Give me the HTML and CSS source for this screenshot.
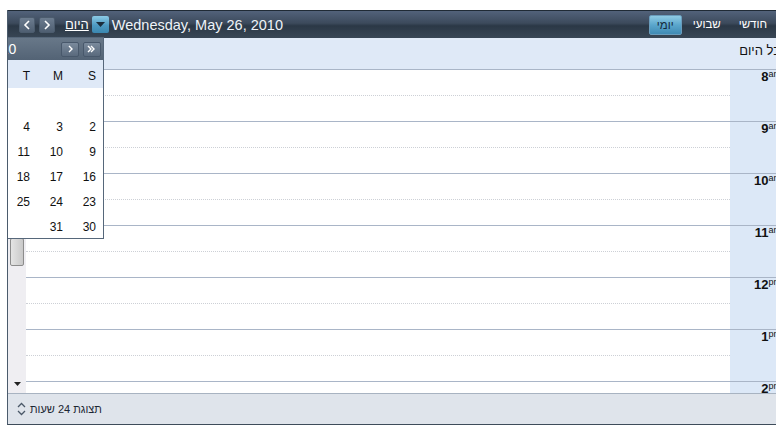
FILE: index.html
```html
<!DOCTYPE html>
<html lang="he">
<head>
    <meta charset="UTF-8">
    <title>Scheduler</title>
    <link rel="stylesheet" href="styles.css">
</head>
<body>
<div class="scheduler">
    <div class="toolbar">
        <div class="nav">
            <span class="nav_btn"><svg width="8" height="10" viewBox="0 0 8 10"><polyline points="6,1 2,5 6,9" fill="none" stroke="#fff" stroke-width="1.6"/></svg></span>
            <span class="nav_btn"><svg width="8" height="10" viewBox="0 0 8 10"><polyline points="2,1 6,5 2,9" fill="none" stroke="#fff" stroke-width="1.6"/></svg></span>
            <a class="today" href="#" dir="rtl">היום</a>
            <span class="drop_btn"><svg width="9" height="5" viewBox="0 0 9 5"><polygon points="0,0 9,0 4.5,5" fill="#1b2d3c"/></svg></span>
            <span class="date">Wednesday, May 26, 2010</span>
        </div>
        <div class="views">
            <span class="view selected" dir="rtl">יומי</span>
            <span class="view" dir="rtl">שבועי</span>
            <span class="view" dir="rtl">חודשי</span>
        </div>
    </div>
    <div class="allday">
        <span class="allday_label" dir="rtl">כל היום</span>
    </div>
    <div class="main">
        <div class="vscroll">
            <div class="thumb"></div>
            <div class="arrow"><svg width="7" height="4" viewBox="0 0 7 4"><polygon points="0,0 7,0 3.5,4" fill="#222"/></svg></div>
        </div>
        <div class="grid">
            <div class="hour"><div class="half"></div></div>
            <div class="hour"><div class="half"></div></div>
            <div class="hour"><div class="half"></div></div>
            <div class="hour"><div class="half"></div></div>
            <div class="hour"><div class="half"></div></div>
            <div class="hour"><div class="half"></div></div>
            <div class="hour"><div class="half"></div></div>
        </div>
        <div class="times">
            <div class="time">8<sup>am</sup></div>
            <div class="time">9<sup>am</sup></div>
            <div class="time">10<sup>am</sup></div>
            <div class="time">11<sup>am</sup></div>
            <div class="time">12<sup>pm</sup></div>
            <div class="time">1<sup>pm</sup></div>
            <div class="time">2<sup>pm</sup></div>
        </div>
    </div>
    <div class="footer">
        <svg class="updown" width="9" height="14" viewBox="0 0 9 14"><polyline points="1,5 4.5,1.5 8,5" fill="none" stroke="#4a5868" stroke-width="1.3"/><polyline points="1,9 4.5,12.5 8,9" fill="none" stroke="#4a5868" stroke-width="1.3"/></svg>
        <span class="footer_text" dir="rtl">תצוגת 24 שעות</span>
    </div>

    <div class="popup">
        <div class="popup_head">
            <span class="pbtn"><svg width="10" height="8" viewBox="0 0 10 8"><polyline points="6,1 3,4 6,7" fill="none" stroke="#fff" stroke-width="1.4"/><polyline points="9,1 6,4 9,7" fill="none" stroke="#fff" stroke-width="1.4"/></svg></span>
            <span class="pbtn"><svg width="8" height="8" viewBox="0 0 8 8"><polyline points="5,1 2,4 5,7" fill="none" stroke="#fff" stroke-width="1.4"/></svg></span>
            <span class="ptitle">May 2010</span>
            <span class="pbtn"><svg width="8" height="8" viewBox="0 0 8 8"><polyline points="3,1 6,4 3,7" fill="none" stroke="#fff" stroke-width="1.4"/></svg></span>
            <span class="pbtn"><svg width="10" height="8" viewBox="0 0 10 8"><polyline points="1,1 4,4 1,7" fill="none" stroke="#fff" stroke-width="1.4"/><polyline points="4,1 7,4 4,7" fill="none" stroke="#fff" stroke-width="1.4"/></svg></span>
        </div>
        <table class="cal">
            <tr class="days"><th>S</th><th>F</th><th>T</th><th>W</th><th>T</th><th>M</th><th>S</th></tr>
            <tr><td>1</td><td></td><td></td><td></td><td></td><td></td><td></td></tr>
            <tr><td>8</td><td>7</td><td>6</td><td>5</td><td>4</td><td>3</td><td>2</td></tr>
            <tr><td>15</td><td>14</td><td>13</td><td>12</td><td>11</td><td>10</td><td>9</td></tr>
            <tr><td>22</td><td>21</td><td>20</td><td>19</td><td>18</td><td>17</td><td>16</td></tr>
            <tr><td>29</td><td>28</td><td>27</td><td>26</td><td>25</td><td>24</td><td>23</td></tr>
            <tr><td></td><td></td><td></td><td></td><td></td><td>31</td><td>30</td></tr>
        </table>
    </div>
</div>
</body>
</html>
```

FILE: styles.css
```css
html, body {
    margin: 0;
    padding: 0;
    overflow: hidden;
    background: #fff;
}
.scheduler {
    position: relative;
    overflow: hidden;
    margin: 10px 0 0 7px;
    width: 778px;
    border-left: 1px solid #4b5b6c;
    border-bottom: 1px solid #3e4c5a;
    font-family: "Liberation Sans", "DejaVu Sans", sans-serif;
    font-size: 12px;
    color: #1c2733;
}
.toolbar {
    display: flex;
    align-items: center;
    justify-content: space-between;
    height: 27px;
    border-top: 1px solid #1f2a35;
    background: linear-gradient(to bottom, #52627a 0%, #3c4a5c 45%, #2b3846 55%, #384655 100%);
}
.nav {
    display: flex;
    align-items: center;
    padding-left: 11px;
}
.nav_btn {
    display: flex;
    align-items: center;
    justify-content: center;
    width: 16px;
    height: 16px;
    margin-right: 4px;
    border: 1px solid #4c5c6e;
    border-radius: 2px;
    background: linear-gradient(to bottom, #6c7c8f, #4f5f72);
    box-sizing: border-box;
}
.today {
    margin-left: 6px;
    color: #fff;
    font-size: 13px;
}
.drop_btn {
    display: flex;
    align-items: center;
    justify-content: center;
    width: 17px;
    height: 17px;
    margin-left: 3px;
    border-radius: 2px;
    background: linear-gradient(to bottom, #8ccbe6, #4d9ac2 55%, #3b87b0);
}
.date {
    margin-left: 3px;
    color: #eef3f8;
    font-size: 14.5px;
}
.views {
    display: flex;
    align-items: center;
    padding-right: 12px;
}
.view {
    padding: 0 7px;
    height: 19px;
    line-height: 19px;
    font-size: 11.5px;
    color: #fff;
    margin-left: 4px;
}
.view.selected {
    color: #16293a;
    border: 1px solid #6a9cbc;
    border-radius: 2px;
    height: 18px;
    line-height: 18px;
    background: linear-gradient(to bottom, #8fcbe4, #5aa6cc 50%, #3f8ab4);
}
.allday {
    height: 31px;
    background: #dfe9f7;
    text-align: right;
    padding-right: 6px;
    box-sizing: border-box;
}
.allday_label {
    display: inline-block;
    margin-top: 5px;
    font-size: 13px;
    color: #111;
}
.main {
    display: flex;
    height: 324px;
    overflow: hidden;
}
.vscroll {
    display: flex;
    flex-direction: column;
    width: 18px;
    padding-top: 169px;
    box-sizing: border-box;
    background: #efeef2;
}
.thumb {
    height: 26px;
    margin: 0 2px;
    border: 1px solid #8c8c8c;
    border-radius: 2px;
    background: linear-gradient(to right, #e4e4e4, #c9c9c9);
}
.arrow {
    margin-top: auto;
    height: 17px;
    display: flex;
    justify-content: center;
    padding-top: 6px;
    box-sizing: border-box;
}
.grid {
    width: 704px;
    background: #fff;
}
.hour {
    height: 52px;
    border-top: 1px solid #a9b5c7;
    box-sizing: border-box;
}
.half {
    height: 25px;
    border-bottom: 1px dotted #cdd0d6;
}
.times {
    width: 55px;
    background: #dce8f7;
}
.time {
    height: 52px;
    border-top: 1px solid #a9b5c7;
    box-sizing: border-box;
    text-align: right;
    padding: 0 4px 0 0;
    font-size: 13px;
    line-height: 14px;
    font-weight: bold;
    color: #111;
}
.time sup {
    font-size: 9px;
    font-weight: normal;
    vertical-align: top;
    line-height: 9px;
}
.footer {
    display: flex;
    align-items: center;
    height: 30px;
    padding-left: 9px;
    border-top: 1px solid #a8b3c1;
    background: #dfe4eb;
}
.footer_text {
    margin-left: 4px;
    font-size: 11px;
    color: #1c2733;
}
.popup {
    position: absolute;
    top: 27px;
    left: -137px;
    width: 233px;
    border: 1px solid #56677a;
    background: #fff;
    box-sizing: border-box;
}
.popup_head {
    display: flex;
    align-items: center;
    height: 22px;
    padding: 0 2px;
    background: linear-gradient(to bottom, #687889, #536375);
}
.ptitle {
    flex: 1;
    text-align: center;
    padding-right: 4px;
    color: #fff;
    font-size: 14px;
}
.pbtn {
    display: flex;
    align-items: center;
    justify-content: center;
    width: 18px;
    height: 15px;
    margin-left: 4px;
    border: 1px solid #48586b;
    border-radius: 2px;
    box-sizing: border-box;
    background: linear-gradient(to bottom, #7a8a9c, #5a6a7d);
}
.cal {
    border-collapse: collapse;
    width: 231px;
    font-size: 12px;
}
.cal th, .cal td {
    width: 33px;
    padding: 3px 7px 0 0;
    text-align: right;
    box-sizing: border-box;
    color: #111;
}
.cal th {
    height: 28px;
    font-weight: normal;
    background: #dfe9f7;
}
.cal td {
    height: 25px;
}
```
